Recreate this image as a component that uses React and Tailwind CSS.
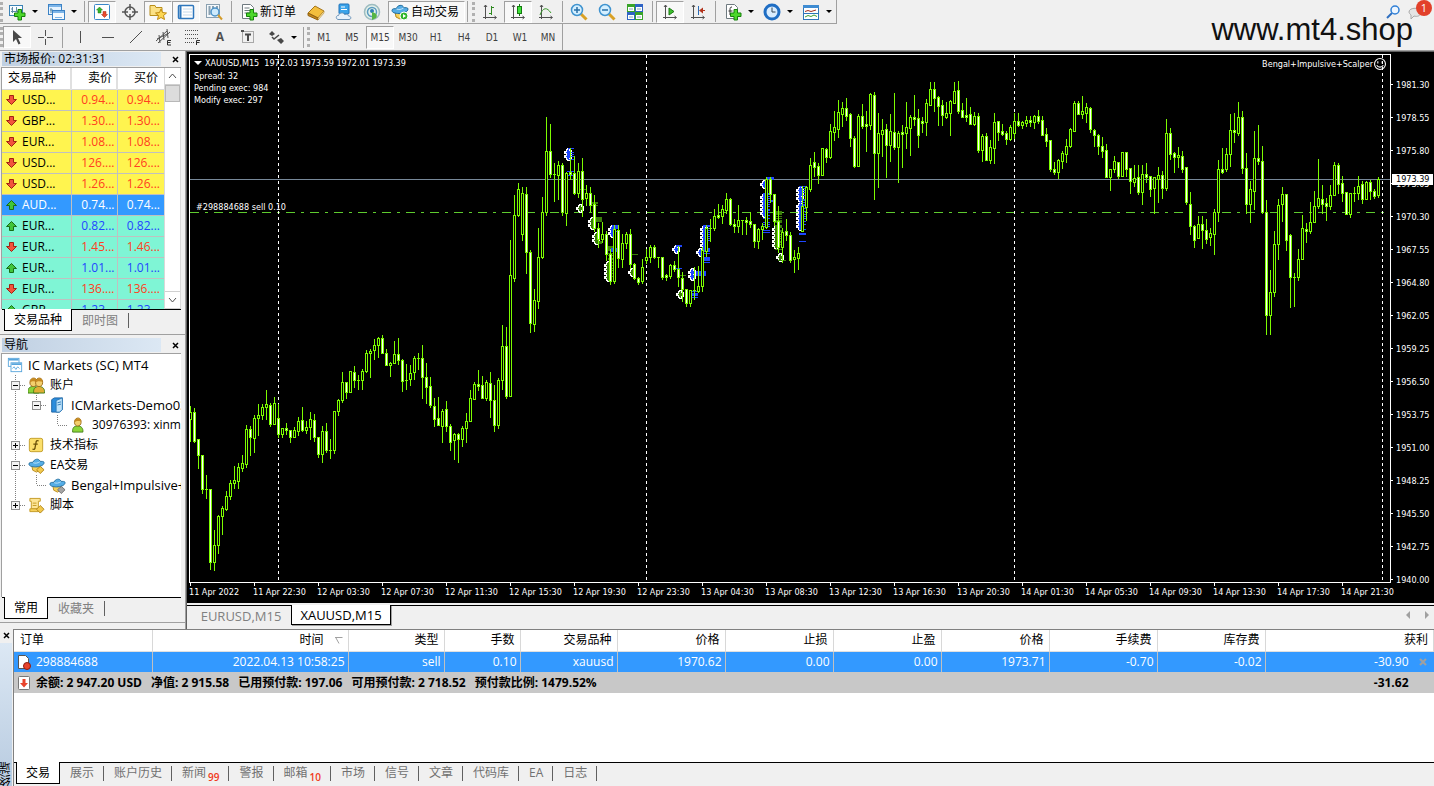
import React from 'react';

// Candles as [high, bodyTop, bodyBottom, low, bearish], one every 4px
const CANDLES = [
  [406,412,419,441,0],[408,412,441,442,1],[439,439,455,468,1],[455,455,489,493,1],[475,489,490,498,1],
  [489,489,562,569,1],[530,545,562,570,0],[515,516,545,553,0],[506,508,516,534,0],[491,496,509,510,0],
  [480,483,496,499,0],[466,480,483,488,0],[463,467,481,488,0],[455,463,468,471,0],[425,429,464,467,0],
  [426,429,437,455,1],[415,418,438,452,0],[404,415,418,435,0],[404,407,415,419,0],[390,404,407,419,0],
  [403,405,424,426,1],[397,403,424,424,0],[404,418,434,437,1],[428,428,434,437,0],[423,428,430,434,1],
  [430,430,437,442,1],[427,430,437,437,0],[417,421,431,435,0],[407,420,430,431,1],[421,427,430,433,0],
  [412,419,427,439,0],[414,420,437,441,1],[437,437,454,457,1],[426,431,454,462,0],[423,431,450,452,1],
  [439,450,451,458,1],[411,411,450,453,0],[399,400,411,415,0],[372,382,400,402,0],[382,382,392,398,1],
  [371,371,392,392,0],[366,372,380,387,1],[375,380,381,389,1],[369,371,380,389,0],[350,353,371,372,0],
  [349,351,353,377,0],[339,345,350,359,0],[337,338,345,357,0],[335,338,353,353,1],[349,353,365,365,1],
  [362,363,365,376,0],[341,354,363,363,0],[338,354,360,364,1],[359,360,381,391,1],[364,380,381,389,1],
  [365,373,379,385,0],[356,358,372,379,0],[353,358,359,369,1],[345,358,377,398,1],[363,377,387,403,1],
  [377,386,405,407,1],[398,406,419,426,1],[397,418,425,425,1],[409,411,426,442,0],[401,409,426,431,1],
  [424,426,442,450,1],[433,434,440,459,0],[433,434,439,462,1],[426,428,439,446,0],[413,421,428,442,0],
  [390,398,421,421,0],[382,384,399,399,0],[370,384,386,390,1],[376,385,398,398,1],[380,382,398,400,0],
  [372,383,400,417,1],[385,400,425,431,1],[378,380,425,428,0],[325,346,380,389,0],[327,346,396,398,1],
  [240,275,396,396,0],[195,215,278,281,0],[183,189,215,216,0],[187,193,234,240,0],[187,194,252,273,1],
  [250,252,323,332,1],[289,300,324,331,0],[228,257,301,308,0],[197,212,257,258,0],[117,151,212,215,0],
  [124,151,174,177,1],[163,174,175,201,1],[161,165,175,199,0],[163,165,212,215,1],[172,173,213,225,0],
  [148,172,174,179,1],[156,173,193,194,1],[163,171,193,197,0],[158,171,199,216,1],[185,193,198,205,0],
  [187,193,205,211,1],[195,204,228,231,1],[223,228,239,247,1],[222,234,239,242,0],[231,234,254,260,1],
  [249,254,281,284,1],[225,229,281,283,0],[225,230,258,267,1],[234,243,259,267,0],[232,234,243,248,0],
  [229,234,264,268,1],[263,264,278,279,1],[277,278,282,284,1],[259,267,281,283,0],[249,257,260,263,0],
  [245,247,257,262,0],[245,247,257,258,1],[257,257,258,267,1],[257,257,277,279,1],[274,275,277,280,1],
  [264,265,276,278,0],[261,265,269,271,1],[246,269,277,286,1],[272,278,289,301,1],[289,289,303,306,1],
  [290,290,303,306,0],[267,290,291,299,1],[266,286,291,292,0],[247,250,286,291,0],[225,228,251,256,0],
  [219,228,229,241,1],[209,216,228,230,0],[204,215,217,218,1],[205,209,216,223,0],[193,199,210,213,0],
  [198,199,224,225,1],[219,224,226,232,1],[205,220,226,232,0],[220,220,221,234,1],[217,220,222,234,1],
  [212,221,224,227,1],[224,224,241,247,1],[228,229,241,248,0],[223,226,229,239,0],[177,179,227,228,0],
  [177,179,194,202,1],[194,194,221,225,1],[206,221,247,252,1],[228,232,247,262,0],[219,231,235,240,1],
  [232,235,260,262,1],[250,257,259,272,0],[247,253,258,269,0],[186,206,231,231,0],[186,187,207,220,0],
  [158,165,189,191,0],[152,162,167,176,1],[163,166,175,183,1],[148,148,175,175,0],[148,149,157,162,1],
  [124,131,157,158,0],[111,127,132,140,0],[100,112,129,137,0],[102,108,114,126,0],[98,108,116,120,1],
  [113,114,138,146,1],[136,138,166,167,1],[114,116,166,166,0],[104,116,126,128,1],[111,124,126,151,1],
  [93,94,125,129,0],[92,95,153,199,1],[113,133,153,187,0],[119,130,134,156,0],[124,129,145,177,1],
  [114,131,145,161,0],[93,132,147,149,1],[131,133,147,182,0],[125,132,134,167,1],[102,127,133,148,0],
  [115,117,128,155,0],[95,117,119,125,1],[109,118,135,147,1],[117,121,123,132,1],[99,103,122,135,0],
  [82,89,105,105,0],[82,89,98,111,1],[96,97,106,125,1],[100,105,115,125,1],[102,113,117,118,0],
  [100,101,113,135,0],[82,91,103,103,0],[81,90,111,113,1],[103,110,117,117,1],[98,115,117,121,1],
  [107,114,124,124,1],[112,116,124,125,0],[113,116,150,152,1],[134,136,150,161,0],[133,136,160,160,1],
  [140,147,160,163,0],[113,122,148,163,0],[121,121,132,140,1],[124,131,134,135,1],[131,133,139,144,1],
  [125,127,139,140,0],[113,121,133,138,0],[113,121,125,126,1],[121,122,125,128,0],[116,120,123,126,0],
  [116,120,122,126,1],[115,116,122,128,0],[110,116,121,123,1],[116,120,135,135,1],[128,134,141,146,1],
  [140,140,169,171,1],[162,169,172,174,1],[159,160,172,178,0],[151,153,161,168,0],[139,146,154,162,0],
  [128,129,146,147,0],[101,103,131,131,0],[101,103,114,114,1],[96,111,114,118,0],[103,107,113,122,0],
  [107,108,129,132,1],[129,130,135,146,1],[134,135,146,154,1],[137,146,151,157,1],[144,150,177,177,1],
  [169,169,177,190,0],[156,161,169,172,0],[162,162,176,178,1],[152,152,176,176,0],[152,152,169,176,1],
  [168,168,181,193,1],[165,178,182,186,0],[165,177,192,194,1],[165,174,192,204,0],[163,174,177,182,1],
  [176,176,189,196,1],[177,177,188,213,0],[167,175,179,202,0],[171,175,188,198,1],[119,133,188,190,0],
  [128,133,154,159,1],[152,153,157,172,1],[147,155,157,167,0],[151,156,169,172,1],[167,167,202,204,1],
  [192,204,226,234,1],[225,226,240,247,1],[216,224,238,238,0],[216,224,230,248,1],[219,230,239,243,1],
  [228,233,237,245,0],[209,212,234,254,0],[160,169,212,221,0],[148,169,172,173,1],[148,154,169,171,0],
  [114,130,154,166,0],[113,130,132,142,1],[102,117,133,135,0],[111,117,168,173,1],[153,168,204,213,1],
  [181,189,204,222,0],[131,158,191,209,0],[125,158,161,164,1],[146,161,212,213,1],[200,212,315,334,1],
  [270,292,315,334,0],[231,244,292,296,0],[199,205,244,259,0],[187,194,204,221,0],[194,194,240,250,1],
  [234,235,277,307,1],[273,277,278,306,1],[249,259,277,280,0],[215,228,259,259,0],[223,229,231,242,1],
  [202,222,231,233,0],[191,206,222,222,0],[159,198,206,208,0],[185,199,204,213,1],[198,203,206,220,1],
  [185,195,206,209,0],[162,165,195,195,0],[163,165,184,193,1],[176,183,193,201,1],[192,192,214,214,1],
  [193,193,214,217,0],[187,193,194,201,1],[176,186,193,199,0],[181,184,199,203,1],[181,182,199,199,0],
  [180,182,191,199,1],[189,191,196,198,1],[177,179,195,197,0],
];

const BLUE = '#1e46ff';
const GREEN = '#3a7d0a';

// Entry arrows: [x, firstY, count, colour]
const ARROWS = [
  [564,148,2,BLUE],[576,204,1,GREEN],[588,217,2,GREEN],[592,232,2,GREEN],[608,225,2,BLUE],
  [604,261,4,GREEN],[628,268,1,GREEN],[672,245,1,BLUE],[676,290,1,GREEN],[688,268,2,BLUE],
  [696,248,1,BLUE],[700,225,5,BLUE],[760,180,1,BLUE],[760,193,5,BLUE],[772,225,5,GREEN],
  [776,253,1,GREEN],[796,186,3,BLUE],[796,202,6,BLUE],
];

// Exit ticks: [x, width, colour, ...y]
const TICKS = [
  [568,6,BLUE,148,152,154,156,159],[567,7,BLUE,171,175],[579,8,GREEN,189],[591,7,GREEN,202,203,205],
  [596,6,GREEN,217,218,219,220,221],[596,6,GREEN,241,242,243],[612,6,BLUE,225,226,227,228,231],
  [608,6,GREEN,246,247,248,249,250,253,255,258,259,262,265,268,270,273,276],[611,6,BLUE,248,249,250,251],
  [630,8,GREEN,254],[676,6,BLUE,245,246],[675,7,BLUE,268],[678,8,GREEN,275],
  [696,10,BLUE,271,272,273,274,275],[691,7,BLUE,291,293,294,295,297],
  [703,7,BLUE,225,226,228,230,232,234,236,238,240],[703,7,BLUE,248,249,250,251,253,257,258,259,260,262],
  [767,7,BLUE,177,178,179],[763,7,BLUE,193,194,196,198,200,202,204,206,209,210,212,215,218,222,224,226,230,232],
  [770,5,BLUE,200,201],[775,7,GREEN,211,212,213,214,216,218,220,221,222,225,226,227,230,231,234,236,238,241,242,244,249],
  [778,8,GREEN,260],[799,7,BLUE,186,188,190,192,195,199,200,202,204,205,208,211,214,216,218,221,224,229],
  [799,7,BLUE,233,234,241],
];

const PRICES = ['1981.30', '1978.55', '1975.80', '1973.05', '1970.30', '1967.55', '1964.80', '1962.05', '1959.25', '1956.50', '1953.75', '1951.00', '1948.25', '1945.50', '1942.75', '1940.00'];

const TIMES = ['11 Apr 2022', '11 Apr 22:30', '12 Apr 03:30', '12 Apr 07:30', '12 Apr 11:30', '12 Apr 15:30', '12 Apr 19:30', '12 Apr 23:30', '13 Apr 04:30', '13 Apr 08:30', '13 Apr 12:30', '13 Apr 16:30', '13 Apr 20:30', '14 Apr 01:30', '14 Apr 05:30', '14 Apr 09:30', '14 Apr 13:30', '14 Apr 17:30', '14 Apr 21:30'];

const QUOTES = [
  ['USD...', '0.94...', '0.94...', 'down', 'yellow'],
  ['GBP...', '1.30...', '1.30...', 'down', 'yellow'],
  ['EUR...', '1.08...', '1.08...', 'down', 'yellow'],
  ['USD...', '126....', '126....', 'down', 'yellow'],
  ['USD...', '1.26...', '1.26...', 'down', 'yellow'],
  ['AUD...', '0.74...', '0.74...', 'up', 'selected'],
  ['EUR...', '0.82...', '0.82...', 'up', 'mint'],
  ['EUR...', '1.45...', '1.46...', 'down', 'mint'],
  ['EUR...', '1.01...', '1.01...', 'up', 'mint'],
  ['EUR...', '136....', '136....', 'down', 'mint'],
  ['GBP...', '1.23...', '1.23...', 'up', 'mint'],
];

const ROW_BG = { yellow: 'bg-[#fff44f]', mint: 'bg-[#7ff5d5]', selected: 'bg-[#3399ff] text-white' };

/* ---------- Icons ---------- */

const Svg = ({ size = 18, children }) => (
  <svg width={size} height={size} viewBox="0 0 18 18" fill="none" className="shrink-0" aria-hidden="true">
    {children}
  </svg>
);

const Plus = ({ x = 6, y = 6 }) => (
  <path
    transform={`translate(${x} ${y})`}
    d="M4 .5h3.5V4H11v3.5H7.5V11H4V7.5H.5V4H4z"
    fill="#4cd82a"
    stroke="#17800c"
  />
);

const Axes = ({ children }) => (
  <Svg>
    <path d="M4.500 2v14M2 14.500h13M3 4l1.500-2L6 4M13.500 13l2 1.500-2 1.500" stroke="#505050" />
    {children}
  </Svg>
);

const Hat = ({ badge }) => (
  <>
    <path d="M4 9h9l-1 5-3 2-4-2z" fill="#f6d15a" stroke="#b98a1c" />
    <path d="M1 7.500C1 5 4 6 5.500 5.500 6 2 12 1 12.500 4.500 14 5 17 4 17 6c0 3-5 4.500-9 4.500S1 9.500 1 7.500z" fill="#55ade6" stroke="#24709f" />
    <path d="M5.500 6c2 1 5 .500 7-1" stroke="#bfe4fa" />
    {badge}
  </>
);

const Person = ({ x = 0, body = '#8bd53a' }) => (
  <g transform={`translate(${x} 0)`}>
    <path d="M1 17c-.500-4 1-7 5.500-7s6.500 3 6 7z" fill={body} stroke="#3f7a14" />
    <path d="M3 6c0-6.500 8-6.500 7.500 0 0 5.500-7.500 5.500-7.500 0z" fill="#f3cf6c" stroke="#9c6a17" />
    <path d="M3 6c0-6 7.500-6 7.500-1-3-.500-5-1-7.500 1z" fill="#c68a22" />
  </g>
);

const ICONS = {
  newChart: (
    <Svg>
      <rect x="1.500" y="2.500" width="13" height="10" fill="#f8fcff" stroke="#3b82b5" />
      <path d="M4.500 4v6M3 6h2M8.500 4v5M3 8.500h9" stroke="#5f8ba8" />
      <Plus />
    </Svg>
  ),
  profiles: (
    <Svg>
      <rect x="1.500" y="1.500" width="13" height="10" fill="#e6f3ff" stroke="#3b82c5" />
      <path d="M2 3h12" stroke="#7db5e8" strokeWidth="2" />
      <path d="M4 5v5M3 7h3" stroke="#5f8ba8" />
      <rect x="5.500" y="7.500" width="12" height="9" fill="#f4faff" stroke="#3b82c5" />
      <path d="M6 9h11" stroke="#7db5e8" strokeWidth="2" />
      <path d="M8 14.500h7" stroke="#7db5e8" />
    </Svg>
  ),
  market: (
    <Svg>
      <rect x="1.500" y="1.500" width="15" height="15" rx="1" fill="#fff" stroke="#3a87c9" />
      <path d="M6.500 4l3 3H8v3H5V7H3.500z" fill="#33b52a" stroke="#1d7a17" strokeWidth=".5" />
      <path d="M11.500 14.500l3-3H13v-3h-3v3H8.500z" fill="#ea4a2d" stroke="#a02a14" strokeWidth=".5" />
    </Svg>
  ),
  crosshair: (
    <Svg>
      <circle cx="9" cy="9" r="5" stroke="#555" strokeWidth="1.500" />
      <path d="M9 1v6M9 11v6M1 9h6M11 9h6" stroke="#555" strokeWidth="1.500" />
    </Svg>
  ),
  navigator: (
    <Svg>
      <path d="M1 2.500h5l1 2h6v8H1z" fill="#fbe186" stroke="#b98f1a" />
      <path d="M12 6l1.500 3.500 4 .500-3 2.500 1 4-3.500-2-3.500 2 1-4-3-2.500 4-.500z" fill="#fcd653" stroke="#c08a10" />
    </Svg>
  ),
  terminal: (
    <Svg>
      <rect x="1.500" y="2.500" width="15" height="13" rx="1" fill="#fff" stroke="#2f77bd" strokeWidth="1.500" />
      <path d="M3.500 3v12" stroke="#2f77bd" strokeWidth="2" />
      <path d="M6 6h9M6 9h9M6 12h9" stroke="#c6d9ea" />
    </Svg>
  ),
  tester: (
    <Svg>
      <rect x="1.500" y="1.500" width="13" height="13" fill="#f4f8fb" stroke="#8aa0b0" />
      <path d="M4.500 3v9M8 3v6M12 3v5" stroke="#8aa0b0" strokeWidth="2" />
      <circle cx="10" cy="9" r="4" fill="#cdeafc" stroke="#4a92c8" strokeWidth="1.500" />
      <path d="M13 12l4 4.500" stroke="#d39b2a" strokeWidth="2" />
    </Svg>
  ),
  order: (
    <Svg>
      <path d="M2.500 1.500h8l3 3v11h-11z" fill="#fff" stroke="#6f7a80" />
      <path d="M4.500 5h5M4.500 7.500h6M4.500 10h5" stroke="#6f7a80" />
      <Plus />
    </Svg>
  ),
  book: (
    <Svg>
      <path d="M1 10L8 3l9 5-6 7z" fill="#f3bf3d" stroke="#a5741a" />
      <path d="M1 10v2.500l10 4.500V15z" fill="#c88b1c" stroke="#8f6010" />
      <path d="M11 15l6-7v2l-6 7z" fill="#fbe7a4" stroke="#a5741a" strokeWidth=".5" />
    </Svg>
  ),
  cloud: (
    <Svg>
      <rect x="4" y="1" width="10" height="10" rx="1" fill="#3aa3ea" stroke="#1e73b9" />
      <path d="M6 4h4M6 6.500h6" stroke="#fff" />
      <path d="M3 16.500c-3-1-1.500-4.500.500-4 1-3.500 5.500-3 6-1 3-1 4 1 4 1.500 3 0 3 3.500.500 3.500z" fill="#e9f2fb" stroke="#6b93b8" />
    </Svg>
  ),
  signals: (
    <Svg>
      <circle cx="9" cy="9" r="7.500" fill="#e3f0ea" stroke="#9dbcc0" strokeWidth="1.500" />
      <circle cx="9" cy="9" r="4.500" stroke="#5b9bc0" strokeWidth="1.500" />
      <circle cx="9" cy="8" r="2" fill="#2f7fb5" />
      <path d="M9 17V9c4 1 6 3 4 6z" fill="#55b543" />
    </Svg>
  ),
  auto: (
    <Svg>
      <Hat badge={<><circle cx="13" cy="13" r="4" fill="#2fb62a" stroke="#fff" /><path d="M12 11l3 2-3 2z" fill="#fff" /></>} />
    </Svg>
  ),
  bars: <Axes><path d="M10.500 3v9M8 10.500h2M11 4.500h2" stroke="#2f8a20" /></Axes>,
  candles: (
    <Axes>
      <path d="M10.500 1v12" stroke="#157a10" />
      <rect x="8.500" y="3.500" width="4" height="7" fill="#3fe23a" stroke="#157a10" />
    </Axes>
  ),
  line: <Axes><path d="M3 12c3-8 7-8 11-2" stroke="#3a9a2c" /></Axes>,
  zoomIn: (
    <Svg>
      <path d="M11 11l5.500 5.500" stroke="#d9a125" strokeWidth="3" />
      <circle cx="7" cy="7" r="5.500" fill="#d4efff" stroke="#3f93cf" strokeWidth="1.500" />
      <path d="M4 7h6M7 4v6" stroke="#2870a8" strokeWidth="1.500" />
    </Svg>
  ),
  zoomOut: (
    <Svg>
      <path d="M11 11l5.500 5.500" stroke="#d9a125" strokeWidth="3" />
      <circle cx="7" cy="7" r="5.500" fill="#d4efff" stroke="#3f93cf" strokeWidth="1.500" />
      <path d="M4 7h6" stroke="#2870a8" strokeWidth="1.500" />
    </Svg>
  ),
  tile: (
    <Svg>
      <path d="M1 1h8v8H1zM9 9h8v8H9z" fill="#39a42a" />
      <path d="M9 1h8v8H9zM1 9h8v8H1z" fill="#2f63c4" />
      <path d="M2 4h6v4H2zM10 4h6v4h-6zM2 12h6v4H2zM10 12h6v4h-6z" fill="#fff" />
      <path d="M3 6h4M11 6h4M3 14h4M11 14h4" stroke="#8ab" />
    </Svg>
  ),
  scroll: <Axes><path d="M8 5l5 3.500L8 12z" fill="#3ec02e" stroke="#1c7a14" /></Axes>,
  shift: <Axes><path d="M9.500 3v9" stroke="#2b6cb5" /><path d="M11 7.500h5" stroke="#b3331c" /><path d="M14 4.500v6l-4-3z" fill="#b3331c" /></Axes>,
  template: (
    <Svg>
      <path d="M2.500 1.500h8l3 3v11h-11z" fill="#fff" stroke="#6f7a80" />
      <path d="M8 4c-2 0-2 1-2 3v5M4.500 8h4" stroke="#333" />
      <Plus />
    </Svg>
  ),
  clock: (
    <Svg>
      <circle cx="9" cy="9" r="7" fill="#d9edff" stroke="#1f6ec4" strokeWidth="3" />
      <path d="M9 4.500V9h3.500" stroke="#345" />
    </Svg>
  ),
  indicators: (
    <Svg>
      <rect x="1.500" y="2.500" width="15" height="14" fill="#fff" stroke="#3076b8" />
      <path d="M1 3.500h16" stroke="#3f8cd2" strokeWidth="3" />
      <path d="M3 8.500l3-1 3 1 5-1.500" stroke="#a32b1d" />
      <path d="M1 10.500h16" stroke="#3076b8" />
      <path d="M3 14l3-1.500 3 1 3-1.500 3 1.500" stroke="#3e9c2f" />
    </Svg>
  ),
  cursor: <Svg><path d="M5 2v12l3-3 2.500 5.500 2-1L10 10h4z" fill="#484848" /></Svg>,
  cross: <Svg><path d="M9.500 2v6M9.500 11v6M2 9.500h6M11 9.500h6" stroke="#505050" /></Svg>,
  vline: <Svg><path d="M9.500 3v12" stroke="#505050" /></Svg>,
  hline: <Svg><path d="M3 9.500h12" stroke="#505050" /></Svg>,
  trend: <Svg><path d="M3 15L15 3" stroke="#505050" /></Svg>,
  channel: (
    <Svg>
      <path d="M1 13L12 3M3 15L15 4M4 7l1 8M8 4l1 8M12 1l1 9M2 11l10-5" stroke="#505050" />
      <path d="M16 12.500h-3.500v4.500H16M13 14.500h2.500" stroke="#303030" />
    </Svg>
  ),
  fibo: (
    <Svg>
      <path d="M2 2.500h14M2 6.500h14M2 10.500h14M2 14.500h9" stroke="#505050" strokeDasharray="1 1" />
      <path d="M13.500 17v-4.500H17M14 14.500h2.500" stroke="#303030" />
    </Svg>
  ),
  label: (
    <Svg>
      <rect x="3.500" y="3.500" width="11" height="11" stroke="#606060" strokeDasharray="1 1" />
      <path d="M2 2h3v2H2z" fill="#505050" />
      <path d="M6 6.500h6M9 6v7" stroke="#484848" strokeWidth="2" />
    </Svg>
  ),
  arrows: (
    <Svg>
      <path d="M2 6l3-3 3 3-3 2zM10 12l4-2 3 3-3 3z" fill="#484848" />
      <path d="M5 9l2 2 5-4" stroke="#484848" strokeWidth="1.500" />
    </Svg>
  ),
};

const Caret = ({ className = 'border-t-black' }) => (
  <span className={`block border-x-3 border-t-3 border-x-transparent ${className}`} />
);

/* ---------- Toolbar ---------- */

const Tool = ({ icon, label, pressed, menu }) => (
  <button aria-label={label} className="flex h-[23px] shrink-0 items-center">
    <span className={`flex h-[22px] w-7 items-center justify-center ${pressed ? 'border border-[#a0a0a0] border-r-white border-b-white bg-[#f8f8f8]' : ''}`}>
      {ICONS[icon]}
    </span>
    {menu && <span className="flex w-[11px] justify-start pl-[1px]"><Caret /></span>}
  </button>
);

const Grip = () => <span className="h-[20px] w-[3px] shrink-0 border-r-3 border-dotted border-[#b0b0b0]" />;
const Sep = ({ className = 'mx-[3px]' }) => <span className={`h-[21px] w-px shrink-0 bg-[#a0a0a0] ${className}`} />;

const Toolbar = () => (
  <header className="relative border-b border-[#a0a0a0] bg-[#f0f0f0]">
    <div className="flex h-6 w-fit items-center border-r border-b border-[#a0a0a0]">
      <Grip />
      <Tool icon="newChart" label="New chart" menu />
      <Tool icon="profiles" label="Profiles" menu />
      <Sep className="mx-[3px]" />
      <Tool icon="market" label="Market watch" pressed />
      <Tool icon="crosshair" label="Data window" />
      <Tool icon="navigator" label="Navigator" pressed />
      <Tool icon="terminal" label="Terminal" pressed />
      <Tool icon="tester" label="Strategy tester" />
      <Sep className="mx-[3px]" />
      <button className="flex h-[22px] w-[67px] items-center gap-[2px] pl-[5px]">
        {ICONS.order}新订单
      </button>
      <Tool icon="book" label="MetaEditor" />
      <Tool icon="cloud" label="Cloud" />
      <Tool icon="signals" label="Signals" />
      <button className="mx-[2px] flex h-[22px] w-[77px] items-center gap-[2px] border border-[#a0a0a0] border-r-white border-b-white bg-[#f8f8f8] pl-[2px]">
        {ICONS.auto}自动交易
      </button>
      <Sep className="mr-1" />
      <Grip />
      <span className="w-px" />
      <Tool icon="bars" label="Bar chart" />
      <Tool icon="candles" label="Candlesticks" pressed />
      <Tool icon="line" label="Line chart" />
      <Sep className="mx-[2px]" />
      <Tool icon="zoomIn" label="Zoom in" />
      <Tool icon="zoomOut" label="Zoom out" />
      <Tool icon="tile" label="Tile windows" />
      <Sep className="mx-[3px]" />
      <Tool icon="scroll" label="Auto scroll" pressed />
      <Tool icon="shift" label="Chart shift" />
      <Sep className="mx-[3px]" />
      <Tool icon="template" label="Templates" menu />
      <Tool icon="clock" label="Periods" menu />
      <Tool icon="indicators" label="Indicators" menu />
    </div>
    <div className="flex h-[26px] w-fit items-center border-r border-[#a0a0a0]">
      <Grip />
      <Tool icon="cursor" label="Cursor" pressed />
      <Tool icon="cross" label="Crosshair" />
      <Sep className="mx-[3px]" />
      <Tool icon="vline" label="Vertical line" />
      <Tool icon="hline" label="Horizontal line" />
      <Tool icon="trend" label="Trend line" />
      <Tool icon="channel" label="Channel" />
      <Tool icon="fibo" label="Fibonacci" />
      <button className="w-7 text-center text-[12px] font-bold text-[#505050]">A</button>
      <Tool icon="label" label="Text label" />
      <Tool icon="arrows" label="Arrows" menu />
      <Sep className="mr-[3px] ml-[2px]" />
      <Grip />
      {['M1', 'M5', 'M15', 'M30', 'H1', 'H4', 'D1', 'W1', 'MN'].map((tf) => (
        <button
          key={tf}
          className={`h-[23px] w-7 font-['DejaVu_Sans_Condensed','DejaVu_Sans',sans-serif] text-[10px] text-[#404040] ${tf === 'M15' ? 'border border-[#a0a0a0] border-r-white border-b-white bg-[#f8f8f8]' : ''}`}
        >
          {tf}
        </button>
      ))}
    </div>

    {/* Search and notifications */}
    <div className="absolute top-0 right-0 flex gap-2 pr-[2px]">
      <button aria-label="Search" className="pt-[3px]">
        <svg width="14" height="14" viewBox="0 0 14 14" fill="none" aria-hidden="true">
          <path d="M1 13l5-5" stroke="#2f6fc0" strokeWidth="2" />
          <circle cx="9" cy="5" r="4" fill="#eef6ff" stroke="#2f7fd6" strokeWidth="1.500" />
        </svg>
      </button>
      <button aria-label="Messages" className="relative h-5 w-6">
        <svg width="14" height="14" viewBox="0 0 14 14" className="mt-[6px]" aria-hidden="true">
          <path d="M1 6c0-5 12-5 12 0 0 4-4 5-7 4l-3 3v-4C2 8 1 7 1 6z" fill="#e4e4e4" stroke="#a8a8a8" />
        </svg>
        <span className="absolute top-0 right-0 flex size-4 items-center justify-center rounded-full bg-[#e2402a] text-[11px] leading-4 text-white">1</span>
      </button>
    </div>
    <a href="#site" className="absolute top-[12px] right-[21px] font-['Liberation_Sans',sans-serif] text-[31px] leading-[35px] text-[#111]">
      www.mt4.shop
    </a>
  </header>
);

/* ---------- Left panels ---------- */

const PanelTitle = ({ children }) => (
  <div className="flex h-[16px] items-center justify-between pr-[4px] pl-[2px]">
    <h2 className="mr-2 h-[14px] flex-1 bg-linear-to-r from-[#c0d0e2] to-[#dce8f4] px-[2px] leading-[14px]">{children}</h2>
    <CloseButton />
  </div>
);

const CloseButton = () => (
  <button aria-label="Close" className="flex h-3 w-3 items-center justify-center">
    <svg width="7" height="7" viewBox="0 0 7 7" aria-hidden="true">
      <path d="M1 1l5 5M6 1L1 6" stroke="#000" strokeWidth="1.500" />
    </svg>
  </button>
);

const Trend = ({ dir }) => (
  <svg width="11" height="10" viewBox="0 0 11 10" className="shrink-0" aria-hidden="true">
    {dir === 'up' ? (
      <path d="M5.500.500l5 5h-3v4h-4v-4h-3z" fill="#41c53a" stroke="#176d14" />
    ) : (
      <path d="M5.500 9.500l5-5h-3v-4h-4v4h-3z" fill="#f2543c" stroke="#a02314" />
    )}
  </svg>
);

const PanelTabs = ({ tabs }) => (
  <div className="mr-[4px] ml-[2px] flex h-[25px] shrink-0 items-start border-t border-black pl-[2px]">
    {tabs.map((tab, i) =>
      i === 0 ? (
        <button key={tab} className="-mt-px h-[22px] border-x border-b border-black bg-white px-[9px] leading-[20px]">{tab}</button>
      ) : (
        <button key={tab} className="mt-[3px] h-[15px] border-r border-[#606060] px-[10px] leading-[14px] text-[#808080]">{tab}</button>
      )
    )}
  </div>
);

const ScrollArrow = ({ up }) => (
  <button aria-label={up ? 'Scroll up' : 'Scroll down'} className="flex h-[17px] w-full items-center justify-center border-b border-[#d0d0d0] bg-white">
    <svg width="9" height="6" viewBox="0 0 9 6" fill="none" aria-hidden="true">
      <path d={up ? 'M1 5l3.500-4L8 5' : 'M1 1l3.500 4L8 1'} stroke="#505050" />
    </svg>
  </button>
);

const MarketWatch = () => (
  <section className="flex h-[284px] shrink-0 flex-col border-b border-[#a0a0a0]">
    <PanelTitle>市场报价: 02:31:31</PanelTitle>
    <div className="mr-[4px] ml-[1px] flex min-h-0 flex-1 border-t border-l border-[#a0a0a0] bg-white">
      <div className="flex-1 overflow-hidden">
        <table className="w-full table-fixed border-collapse leading-[20px]">
          <colgroup>
            <col className="w-[69px]" />
            <col className="w-[46px]" />
            <col />
          </colgroup>
          <thead>
            <tr className="h-[21px] border-b border-[#d8d8d8]">
              <th className="border-r-2 border-[#e0e0e0] p-0 pl-[6px] text-left font-normal">交易品种</th>
              <th className="border-r-2 border-[#e0e0e0] p-0 pr-[4px] text-right font-normal">卖价</th>
              <th className="p-0 pr-[6px] text-right font-normal">买价</th>
            </tr>
          </thead>
          <tbody>
            {QUOTES.map(([symbol, bid, ask, dir, tone], i) => {
              const color = tone === 'selected' ? 'text-white' : dir === 'up' ? 'text-[#1f47ff]' : 'text-[#ff4020]';
              return (
                <tr key={i} className={`h-[21px] border-b border-[#c0c0c0] ${ROW_BG[tone]}`}>
                  <td className="border-r border-[#c0c0c0] p-0 pl-1">
                    <span className="flex items-center gap-[5px]"><Trend dir={dir} />{symbol}</span>
                  </td>
                  <td className={`border-r border-[#c0c0c0] p-0 pr-[2px] text-right ${color}`}>{bid}</td>
                  <td className={`p-0 pr-[4px] text-right ${color}`}>{ask}</td>
                </tr>
              );
            })}
          </tbody>
        </table>
      </div>
      <div className="flex w-[17px] flex-col border-x border-[#d8d8d8] bg-[#f8f8f8]">
        <ScrollArrow up />
        <span className="h-[17px] border border-[#b8b8b8] bg-[#dcdcdc]" />
        <span className="flex-1 border-b border-[#d0d0d0] bg-white" />
        <ScrollArrow />
      </div>
    </div>
    <PanelTabs tabs={['交易品种', '即时图']} />
  </section>
);

// One cell of the tree's dotted guide lines
const Guide = ({ type }) => (
  <svg width="21" height="20" viewBox="0 0 21 20" fill="none" className="shrink-0" aria-hidden="true">
    {type !== 'none' && (
      <path d={['elbow', 'last', 'openEnd'].includes(type) ? 'M10.500 0v10' : 'M10.500 0v20'} stroke="#808080" strokeDasharray="1 1" />
    )}
    {type !== 'none' && type !== 'line' && <path d="M11 10.500h10" stroke="#808080" strokeDasharray="1 1" />}
    {['open', 'closed', 'last', 'openEnd'].includes(type) && (
      <>
        <rect x="6.500" y="6.500" width="8" height="8" fill="#f4f4f4" stroke="#909090" />
        <path d={type === 'closed' || type === 'last' ? 'M8 10.500h5M10.500 8v5' : 'M8 10.500h5'} stroke="#000" />
      </>
    )}
  </svg>
);

const TREE_ICONS = {
  root: (
    <Svg size={16}>
      <rect x="1.500" y="1.500" width="12" height="9" fill="#fff" stroke="#57a5dc" />
      <path d="M2 3h11" stroke="#57a5dc" strokeWidth="2" />
      <rect x="4.500" y="6.500" width="12" height="10" fill="#fff" stroke="#57a5dc" />
      <path d="M5 8h11" stroke="#57a5dc" strokeWidth="2" />
      <path d="M6 13l2-2 2 3 2-3 2 2" stroke="#57a5dc" />
    </Svg>
  ),
  people: <Svg size={17}><Person x={-1} /><Person x={5} body="#dfae35" /></Svg>,
  server: (
    <Svg size={16}>
      <path d="M3 3l3-2h9v13l-3 3H3z" fill="#2c8ddd" stroke="#185f9f" />
      <path d="M8 4l7-3v13l-3 3H8z" fill="#bfe3fb" stroke="#2c78b5" />
      <path d="M9.500 6.500l4-1M9.500 9l4-1" stroke="#2c78b5" />
    </Svg>
  ),
  person: <Svg size={16}><Person x={2} /></Svg>,
  func: (
    <Svg size={16}>
      <rect x="1.500" y="1.500" width="15" height="15" rx="2" fill="#fbdf6b" stroke="#c09a22" />
      <path d="M12 4.500c-2-1-3 0-3 2l-1 5c0 2-1 3-3 2M6 8h5" stroke="#6b5208" strokeWidth="1.500" />
    </Svg>
  ),
  ea: <Svg size={17}><Hat badge={<path d="M13 10l4 3.500-4 4-4-4z" fill="#f2c94d" stroke="#b08518" />} /></Svg>,
  eaOff: <Svg size={17}><Hat badge={<path d="M13 10l4 3.500-4 4-4-4z" fill="#a5a5a5" stroke="#707070" />} /></Svg>,
  script: (
    <Svg size={17}>
      <path d="M2 1.500h11v3h-2v8H3.500v-8H2z" fill="#fde595" stroke="#c39a24" />
      <path d="M2 12.500h9v3H2z" fill="#f7d15a" stroke="#c39a24" />
      <path d="M5 6.500h4M5 9h4" stroke="#c39a24" />
      <path d="M13 9l4 4-4 4-4-4z" fill="#f2c94d" stroke="#b08518" />
    </Svg>
  ),
};

const TREE = [
  { guides: ['open'], icon: 'people', label: '账户' },
  { guides: ['line', 'openEnd'], icon: 'server', label: 'ICMarkets-Demo03', wide: true },
  { guides: ['line', 'none', 'elbow'], icon: 'person', label: '30976393: xinmeng' },
  { guides: ['closed'], icon: 'func', label: '技术指标' },
  { guides: ['open'], icon: 'ea', label: 'EA交易' },
  { guides: ['line', 'elbow'], icon: 'eaOff', label: 'Bengal+Impulsive+Scalper', wide: true },
  { guides: ['last'], icon: 'script', label: '脚本' },
];

const Navigator = () => (
  <section className="flex min-h-0 flex-1 flex-col border-b border-[#a0a0a0] pt-[2px]">
    <PanelTitle>导航</PanelTitle>
    <ul className="mr-[4px] ml-[1px] min-h-0 flex-1 overflow-hidden border-t border-l border-[#a0a0a0] bg-white pt-px leading-[20px] whitespace-nowrap">
      <li className="flex h-5 items-center gap-[5px] pl-[5px] text-[13px]">{TREE_ICONS.root}IC Markets (SC) MT4</li>
      {TREE.map(({ guides, icon, label, wide }) => (
        <li key={label} className={`flex h-5 items-center pl-[3px] ${wide ? 'text-[13px]' : ''}`}>
          {guides.map((type, i) => <Guide key={i} type={type} />)}
          <span className="mr-[5px] ml-[1px] flex w-[18px] shrink-0 justify-center">{TREE_ICONS[icon]}</span>
          <span>{label}</span>
        </li>
      ))}
    </ul>
    <PanelTabs tabs={['常用', '收藏夹']} />
  </section>
);

/* ---------- Chart ---------- */

// White outlines go down first so stacked arrows keep their colour
const PlotMarkers = () => {
  const arrows = ARROWS.flatMap(([x, y, count, color]) =>
    Array.from({ length: count }, (_, n) => ({ x, y: y + n * 4, color }))
  );
  return (
    <>
      {arrows.map(({ x, y }) => (
        <path key={`o${x}-${y}`} d={`M${x} ${y + 3}h2v-2h1v-1h3v2h2v5h-2v2h-3v-1h-1v-2h-2z`} fill="#fff" />
      ))}
      {arrows.map(({ x, y, color }) => (
        <path key={`f${x}-${y}`} d={`M${x + 2} ${y + 4}h1v-2h1v-1h1v2h2v3h-2v2h-1v-1h-1v-2h-1z`} fill={color} />
      ))}
      {TICKS.flatMap(([x, w, color, ...ys]) =>
        ys.map((y) => <rect key={`${x}-${y}-${w}`} x={x} y={y} width={w} height="1" fill={color} />)
      )}
    </>
  );
};

const Plot = () => (
  <svg className="absolute inset-0 h-full w-full" shapeRendering="crispEdges" role="img" aria-label="XAUUSD M15">
    <g transform="translate(-190 -55)">
      <path d="M190 179.500H2400" stroke="#778899" />
      <path d="M190 212.500H2400" stroke="#5ecb2e" strokeDasharray="9 6 3 6" />
      {[278, 646, 1014, 1382].map((x) => (
        <path key={x} d={`M${x + 0.5} 55V1400`} stroke="#fff" strokeDasharray="3 3" />
      ))}
      <PlotMarkers />
      {CANDLES.map(([high, top, bottom, low, bearish], i) => {
        const x = 190 + i * 4;
        const h = bottom - top;
        return (
          <g key={i}>
            <rect x={x} y={high} width="1" height={low - high + 1} fill="#7cfc00" />
            <rect x={x - 1} y={top} width="3" height={h > 1 ? h + 1 : 1} fill="#7cfc00" />
            {h > 1 && <rect x={x} y={top + 1} width="1" height={h - 1} fill={bearish ? '#fff' : '#000'} />}
          </g>
        );
      })}
    </g>
  </svg>
);

const Chart = () => (
  <div className="flex min-h-0 flex-1 overflow-hidden bg-black pt-[2px] pl-[2px] font-['DejaVu_Sans_Condensed','DejaVu_Sans',sans-serif] text-[9px] leading-[12px] text-white">
    <div className="flex min-w-0 flex-1 flex-col">
      <div className="relative flex-1 overflow-hidden border border-white">
        <Plot />
        <div className="relative flex justify-between pt-[2px] pr-1 pl-[4px]">
          <div>
            <p className="flex items-center gap-[3px] pb-px whitespace-pre">
              <span className="border-x-4 border-t-4 border-x-transparent border-t-white" />
              {'XAUUSD,M15  1972.03 1973.59 1972.01 1973.39'}
            </p>
            <p>Spread: 32</p>
            <p>Pending exec: 984</p>
            <p>Modify exec: 297</p>
          </div>
          <p className="flex h-[14px] items-center gap-px">
            Bengal+Impulsive+Scalper
            <svg width="12" height="12" viewBox="0 0 11 11" fill="none" stroke="#fff" aria-hidden="true">
              <circle cx="5.500" cy="5.500" r="5" />
              <path d="M3.500 3v2M7.500 3v2M2.500 6.500c1 2.500 5 2.500 6 0" />
            </svg>
          </p>
        </div>
        <p className="absolute top-[146px] left-[6px]">#298884688 sell 0.10</p>
      </div>
      <div className="flex h-5 shrink-0">
        {TIMES.map((time) => (
          <span key={time} className="relative w-16 shrink-0 pt-[3px] whitespace-nowrap">
            <span className="absolute top-0 left-px h-[3px] w-px bg-white" />
            {time}
          </span>
        ))}
      </div>
    </div>
    <div className="relative w-[43px] shrink-0 pt-[14px]">
      {PRICES.map((price) => (
        <div key={price} className="flex h-[33px] items-center gap-[3px]">
          <span className="h-px w-[2px] bg-white" />
          {price}
        </div>
      ))}
      <span className="absolute top-[120px] right-px left-px h-[11px] bg-white pl-1 leading-[11px] text-black">1973.39</span>
    </div>
  </div>
);

const ChartArea = () => (
  <main className="flex min-w-0 flex-1 flex-col border-t border-l border-[#606060]">
    <Chart />
    <div className="mt-[2px] flex h-6 shrink-0 items-start border-t border-black">
      <button className="h-[20px] w-[104px] pl-1 text-center text-[13px] leading-[21px] text-[#808080]">EURUSD,M15</button>
      <button className="-mt-px h-[20px] w-[100px] border-x border-b border-black bg-white text-center text-[13px] leading-[21px] shadow-[1px_1px_0_#a0a0a0]">XAUUSD,M15</button>
      <span className="mt-[5px] mr-[5px] ml-auto flex gap-[15px]">
        <button aria-label="Previous chart" className="border-y-4 border-r-4 border-y-transparent border-r-[#a0a0a0]" />
        <button aria-label="Next chart" className="border-y-4 border-l-4 border-y-transparent border-l-[#a0a0a0]" />
      </span>
    </div>
  </main>
);

/* ---------- Terminal ---------- */

const COLUMNS = ['订单', '时间', '类型', '手数', '交易品种', '价格', '止损', '止盈', '价格', '手续费', '库存费', '获利'];
const ORDER = ['298884688', '2022.04.13 10:58:25', 'sell', '0.10', 'xauusd', '1970.62', '0.00', '0.00', '1973.71', '-0.70', '-0.02'];
const BALANCE = ['余额: 2 947.20 USD', '净值: 2 915.58', '已用预付款: 197.06', '可用预付款: 2 718.52', '预付款比例: 1479.52%'];

const TERMINAL_TABS = [
  ['展示'], ['账户历史'], ['新闻', '99'], ['警报'], ['邮箱', '10'], ['市场'],
  ['信号'], ['文章'], ['代码库'], ['EA'], ['日志'],
];

const Terminal = () => (
  <section className="flex h-[157px] shrink-0 bg-[#f0f0f0]">
    <div className="flex w-[13px] shrink-0 flex-col items-start overflow-hidden">
      <CloseButton />
      <h2 className="mt-[2px] flex w-3 flex-1 items-end bg-linear-to-b from-[#dce8f4] to-[#b8cbe0] leading-[12px]">
        <span className="rotate-180 [writing-mode:vertical-rl]">终端</span>
      </h2>
    </div>
    <div className="flex min-w-0 flex-1 flex-col border-t border-l border-[#808080] bg-white">
      <div className="flex-1 overflow-hidden">
        <table className="w-full table-fixed border-collapse text-right leading-[20px] whitespace-nowrap">
          <colgroup>
            <col className="w-[138px]" />
            <col className="w-[196px]" />
            <col className="w-[96px]" />
            <col className="w-[76px]" />
            <col className="w-[97px]" />
            <col className="w-[108px]" />
            <col className="w-[108px]" />
            <col className="w-[108px]" />
            <col className="w-[108px]" />
            <col className="w-[108px]" />
            <col className="w-[108px]" />
            <col />
          </colgroup>
          <thead>
            <tr className="h-[21px] border-b border-[#e0e0e0]">
              {COLUMNS.map((col, i) => (
                <th key={i} className={`border-r border-[#d8d8d8] p-0 font-normal ${i === 0 ? 'pl-[6px] text-left' : 'pr-[5px]'}`}>
                  {i === 1 ? (
                    <span className="flex items-center justify-end gap-[11px]">
                      {col}
                      <svg width="8" height="7" viewBox="0 0 8 7" fill="none" stroke="#a0a0a0" aria-hidden="true">
                        <path d="M0 .500h7.500M1 1l3 5.500" />
                      </svg>
                    </span>
                  ) : col}
                </th>
              ))}
            </tr>
          </thead>
          <tbody>
            <tr className="h-[21px] bg-[#3399ff] text-white">
              {ORDER.map((value, i) => (
                <td key={i} className={`border-r border-[#c0c0c0] p-0 ${i === 0 ? 'text-left' : 'pr-[3px]'}`}>
                  {i === 0 ? (
                    <span className="flex items-center gap-[5px] pl-[3px]">
                      <svg width="14" height="16" viewBox="0 0 14 16" aria-hidden="true">
                        <path d="M1.500 1.500h7l3 3v10h-10z" fill="#fff" stroke="#555" />
                        <circle cx="10" cy="12" r="3.500" fill="#e8432b" stroke="#8d1d10" />
                      </svg>
                      {value}
                    </span>
                  ) : value}
                </td>
              ))}
              <td className="p-0 pr-[7px]">
                <span className="flex items-center justify-end gap-[10px]">
                  -30.90
                  <button aria-label="Close order">
                    <svg width="8" height="8" viewBox="0 0 8 8" aria-hidden="true">
                      <path d="M1 1l6 6M7 1L1 7" stroke="#a0a0a0" strokeWidth="2" />
                    </svg>
                  </button>
                </span>
              </td>
            </tr>
            <tr className="h-[21px] bg-[#c8c8c8] font-bold">
              <td colSpan={11} className="p-0 text-left">
                <span className="flex items-center gap-[9px] pl-[3px]">
                  <svg width="14" height="14" viewBox="0 0 14 14" className="-mr-1" aria-hidden="true">
                    <rect x="1.500" y=".5" width="11" height="13" rx="1" fill="#fff" stroke="#777" />
                    <path d="M7 11.500l4-4.500H8.500V3h-3v4H3z" fill="#e8432b" />
                  </svg>
                  {BALANCE.map((item) => <span key={item}>{item}</span>)}
                </span>
              </td>
              <td className="p-0 pr-[25px]">-31.62</td>
            </tr>
          </tbody>
        </table>
      </div>
      <nav className="flex h-6 shrink-0 items-start border-t border-black bg-[#f0f0f0] pl-[2px]">
        <button className="-mt-px h-[22px] w-11 border-x border-b border-black bg-white leading-[20px]">交易</button>
        {TERMINAL_TABS.map(([label, count]) => (
          <button key={label} className="mt-[3px] flex h-[15px] border-r border-[#606060] pr-[9px] pl-[10px] leading-[14px] text-[#707070]">
            {label}
            {count && <span className="mt-1 ml-[2px] text-[10px] font-semibold text-[#f03a20]">{count}</span>}
          </button>
        ))}
      </nav>
    </div>
  </section>
);

export default function App() {
  return (
    <div className="flex h-screen flex-col overflow-hidden bg-[#f0f0f0] font-['Open_Sans','Noto_Sans_CJK_SC',sans-serif] text-[12px] text-black">
      <Toolbar />
      <div className="flex min-h-0 flex-1">
        <aside className="flex w-[186px] shrink-0 flex-col border-r border-[#a0a0a0] pb-[6px]">
          <MarketWatch />
          <Navigator />
        </aside>
        <ChartArea />
      </div>
      <Terminal />
    </div>
  );
}
